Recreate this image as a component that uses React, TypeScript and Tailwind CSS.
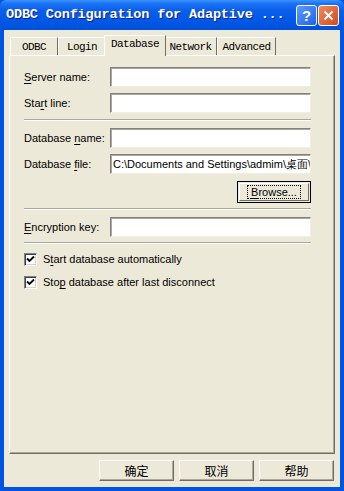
import { ReactNode } from 'react'

const ui = "font-['Tahoma','Liberation_Sans','Arial',sans-serif]"
const cjk = "font-['Noto_Sans_CJK_SC','Noto_Sans',sans-serif]"

function U({ children }: { children: ReactNode }) {
  return <span className="underline underline-offset-[2px]">{children}</span>
}

function Field({ value = '' }: { value?: string }) {
  return (
    <div className="w-[201px] h-[20px] shrink-0 bg-white border border-t-[#808080] border-l-[#808080] border-b-[#f1efe2] border-r-[#f1efe2] shadow-[inset_1px_1px_0_#aca899] overflow-hidden whitespace-nowrap">
      <span className="block pl-[2px] pt-[2px] text-[11px] leading-[14px] text-black">{value}</span>
    </div>
  )
}

function Row({ label, value, className = '' }: { label: ReactNode; value?: string; className?: string }) {
  return (
    <div className={`flex items-center ${className}`}>
      <div className="w-[86px] shrink-0 whitespace-nowrap text-[11px] text-black">{label}</div>
      <Field value={value} />
    </div>
  )
}

function Sep({ className = '' }: { className?: string }) {
  return <div className={`w-[287px] h-[2px] border-t border-[#aca899] border-b border-b-white ${className}`} />
}

function Check({ label, className = '' }: { label: ReactNode; className?: string }) {
  return (
    <div className={`flex items-center h-[14px] ${className}`}>
      <div className="w-[13px] h-[13px] bg-white border border-t-[#808080] border-l-[#808080] border-b-white border-r-white shadow-[inset_1px_1px_0_#404040,inset_-1px_-1px_0_#d4d0c8] flex items-center justify-center">
        <svg width="9" height="9" viewBox="0 0 9 9">
          <path d="M1 3.5 L3.5 6 L8 1.5" fill="none" stroke="#000" strokeWidth="1.8" />
        </svg>
      </div>
      <span className="ml-[6px] text-[11px] leading-[14px] text-black whitespace-nowrap">{label}</span>
    </div>
  )
}

function Btn({ children }: { children: ReactNode }) {
  return (
    <div className={`w-[75px] h-[21px] bg-[#ece9d8] border border-t-white border-l-white border-b-[#716f64] border-r-[#716f64] shadow-[inset_-1px_-1px_0_#aca899] flex items-center justify-center text-[12px] text-black ${cjk}`}>
      {children}
    </div>
  )
}

export default function App() {
  const tabs = ['ODBC', 'Login', 'Database', 'Network', 'Advanced']
  const widths = ['w-[48px]', 'w-[48px]', 'w-[62px]', 'w-[53px]', 'w-[59px]']

  return (
    <div className={`w-[344px] h-[491px] bg-[#0054e3] flex flex-col ${ui}`}>
      {/* title bar */}
      <div className="h-[30px] shrink-0 flex items-center pl-[6px] pr-[5px] bg-[linear-gradient(to_bottom,#3d93ff_0%,#1a73f5_12%,#0a5fea_35%,#0058e6_70%,#0050d8_100%)] rounded-t-[6px]">
        <span className="text-white font-bold text-[13.6px] font-['Liberation_Mono','DejaVu_Sans_Mono',monospace] tracking-[-0.2px] [text-shadow:1px_1px_0_#0a1e8c] whitespace-nowrap">
          ODBC Configuration for Adaptive ...
        </span>
        <div className="ml-auto flex gap-[1px]">
          <div className="w-[21px] h-[21px] rounded-[3px] border border-white bg-[linear-gradient(135deg,#5c9cff,#1f62e8)] flex items-center justify-center text-white font-bold text-[15px] leading-none font-['Liberation_Sans',sans-serif]">
            ?
          </div>
          <div className="w-[21px] h-[21px] rounded-[3px] border border-white bg-[linear-gradient(135deg,#f08a5c,#d34a20)] flex items-center justify-center">
            <svg width="11" height="11" viewBox="0 0 11 11">
              <path d="M1.5 1.5 L9.5 9.5 M9.5 1.5 L1.5 9.5" stroke="#fff" strokeWidth="2" />
            </svg>
          </div>
        </div>
      </div>

      {/* body */}
      <div className="flex-1 mx-[4px] mb-[4px] bg-[#ece9d8] flex flex-col px-[5px] pt-[7px]">
        {/* tabs */}
        <div className="flex items-end h-[18px] relative z-10 pl-[1px]">
          {tabs.map((t, i) => {
            const sel = i === 2
            return (
              <div
                key={t}
                className={`${widths[i]} flex items-center justify-center text-[11px] tracking-[-0.6px] text-black font-['Liberation_Mono','DejaVu_Sans_Mono',monospace] border-l border-t border-r border-l-white border-t-white border-r-[#716f64] bg-[#ece9d8] ${
                  sel ? 'h-[21px] -mb-[1px] -mx-[2px] pb-[4px] z-10' : 'h-[18px] pt-[1px]'
                }`}
              >
                {t}
              </div>
            )
          })}
        </div>

        {/* panel */}
        <div className="h-[399px] border border-t-white border-l-white border-b-[#716f64] border-r-[#716f64] shadow-[inset_-1px_-1px_0_#aca899] pl-[14px] pt-[11px] flex flex-col">
          <Row label={<><U>S</U>erver name:</>} />
          <Row label={<>Sta<U>r</U>t line:</>} className="mt-[6px]" />
          <Sep className="mt-[6px]" />
          <Row label={<>Database <U>n</U>ame:</>} className="mt-[7px]" />
          <Row label={<>Database <U>f</U>ile:</>} value="C:\Documents and Settings\admim\桌面\" className="mt-[6px]" />
          <div className="w-[287px] flex justify-end mt-[7px]">
            <div className="w-[74px] h-[22px] border border-black bg-[#ece9d8] p-[1px]">
              <div className="w-full h-full border border-t-white border-l-white border-b-[#716f64] border-r-[#716f64] flex items-center justify-center">
                <div className="px-[3px] h-[14px] border border-dotted border-black flex items-center text-[11px] text-black leading-none">
                  <U>B</U>rowse...
                </div>
              </div>
            </div>
          </div>
          <Sep className="mt-[5px]" />
          <Row label={<><U>E</U>ncryption key:</>} className="mt-[7px]" />
          <Sep className="mt-[5px]" />
          <Check label={<>S<U>t</U>art database automatically</>} className="mt-[8px]" />
          <Check label={<>Sto<U>p</U> database after last disconnect</>} className="mt-[9px]" />
        </div>

        {/* buttons */}
        <div className="flex justify-end gap-[5px] mt-[6px] pr-[1px]">
          <Btn>确定</Btn>
          <Btn>取消</Btn>
          <Btn>帮助</Btn>
        </div>
      </div>
    </div>
  )
}
